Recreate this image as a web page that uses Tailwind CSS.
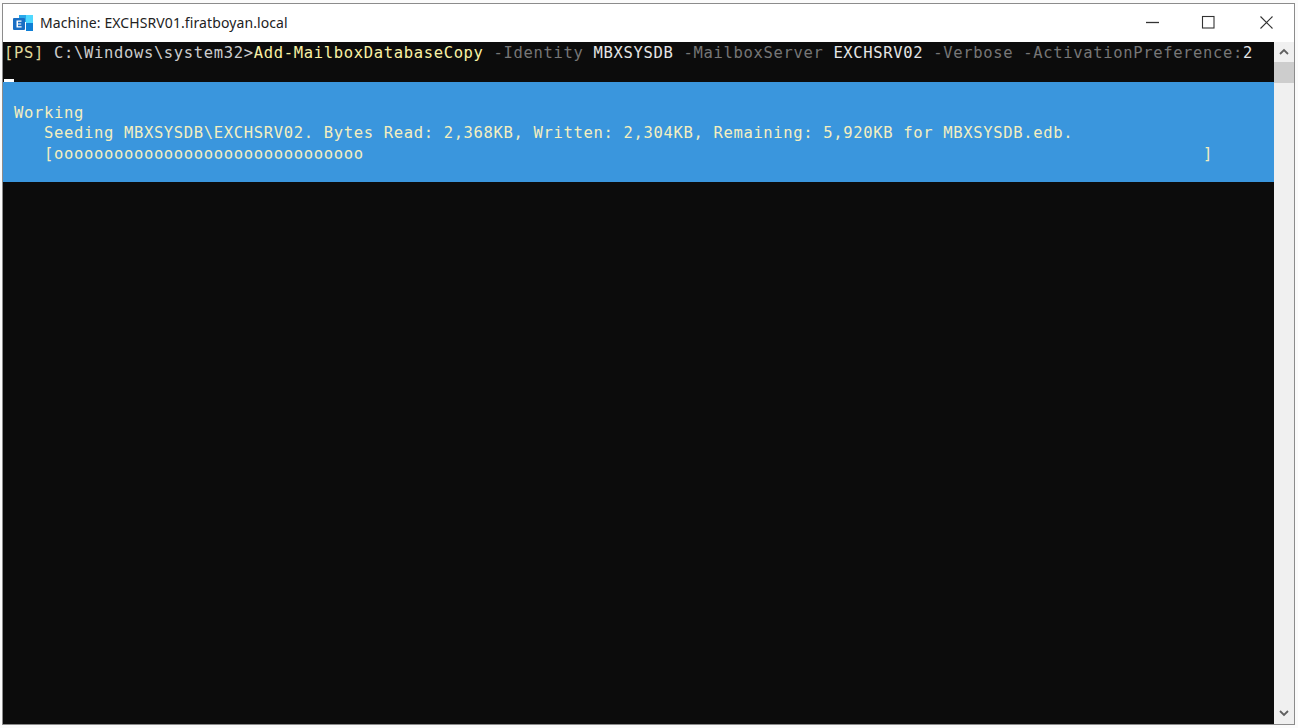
<!doctype html>
<html>
<head>
<meta charset="utf-8">
<script src="https://cdn.jsdelivr.net/npm/@tailwindcss/browser@4"></script>
</head>
<body class="m-0 bg-white">
<div class="w-[1298px] h-[728px] bg-[#fbfbfb] pt-[3px] pl-[2px] pr-[3px] pb-[3px] overflow-hidden">
  <div class="h-full flex flex-col border border-[#8c8c8c] bg-white">
    <header class="h-[38px] shrink-0 flex items-center bg-white">
      <svg class="ml-[10px] w-[20px] h-[17px]" viewBox="0 0 20 17">
        <rect x="6" y="0" width="7" height="7" fill="#28a8ea"/>
        <rect x="13" y="0" width="7" height="8" fill="#50d9ff"/>
        <rect x="13" y="8" width="7" height="8" fill="#0f7fd6"/>
        <rect x="0" y="3" width="12" height="12" rx="1" fill="#1a6fc4"/>
        <path d="M3.5 5.5h5v1.3H5v1.6h3.2v1.2H5v1.6h3.6v1.3H3.5z" fill="#fff"/>
      </svg>
      <span class="ml-[7px] mb-[2px] font-['Noto_Sans',sans-serif] text-[14px] text-[#222] tracking-[0.1px]">Machine: EXCHSRV01.firatboyan.local</span>
      <div class="ml-auto flex items-center h-full">
        <svg class="w-[58px] h-[38px]" viewBox="0 0 58 38"><path d="M26 18.5h13" stroke="#333" stroke-width="1.3"/></svg>
        <svg class="w-[58px] h-[38px]" viewBox="0 0 58 38"><rect x="24.5" y="12.5" width="11.5" height="11.5" fill="none" stroke="#333" stroke-width="1.1"/></svg>
        <svg class="w-[58px] h-[38px]" viewBox="0 0 58 38"><path d="M24.5 12.5l12 12M36.5 12.5l-12 12" stroke="#333" stroke-width="1.1"/></svg>
      </div>
    </header>
    <div class="flex-1 flex min-h-0">
      <main class="flex-1 bg-[#0c0c0c] font-['DejaVu_Sans_Mono',monospace] text-[15.5px] leading-[20px] tracking-[0.66px] text-[#ccc] overflow-hidden">
        <div class="pl-[1px] pt-[1px] h-[20px] whitespace-pre"><span class="text-[#e0da9c]">[PS]</span> C:\Windows\system32&gt;<span class="text-[#f9f1a5]">Add-MailboxDatabaseCopy</span> <span class="text-[#767676]">-Identity</span> <span class="text-[#e6e6e6]">MBXSYSDB</span> <span class="text-[#767676]">-MailboxServer</span> <span class="text-[#e6e6e6]">EXCHSRV02</span> <span class="text-[#767676]">-Verbose</span> <span class="text-[#767676]">-ActivationPreference:</span><span class="text-[#e6e6e6]">2</span></div>
        <div class="h-[20px] flex items-end"><div class="ml-[1px] w-[10px] h-[3px] bg-white"></div></div>
        <div class="h-[100px] bg-[#3a96dd] text-[#f4efc0] pt-[21px] pl-[1px]">
          <div class="whitespace-pre"> Working</div>
          <div class="whitespace-pre">    Seeding MBXSYSDB\EXCHSRV02. Bytes Read: 2,368KB, Written: 2,304KB, Remaining: 5,920KB for MBXSYSDB.edb.</div>
          <div class="whitespace-pre pt-[1px]">    [ooooooooooooooooooooooooooooooo                                                                                    ]</div>
        </div>
      </main>
      <aside class="w-[20px] shrink-0 bg-[#f0f0f0] flex flex-col">
        <div class="h-[20px] flex items-center justify-center"><svg class="w-[10px] h-[8px]" viewBox="0 0 10 8"><path d="M1 6l4-4 4 4" fill="none" stroke="#606060" stroke-width="1.8"/></svg></div>
        <div class="h-[21px] bg-[#cdcdcd]"></div>
        <div class="flex-1"></div>
        <div class="h-[20px] pb-[2px] flex items-center justify-center"><svg class="w-[10px] h-[8px]" viewBox="0 0 10 8"><path d="M1 2l4 4 4-4" fill="none" stroke="#606060" stroke-width="1.8"/></svg></div>
      </aside>
    </div>
  </div>
</div>
</body>
</html>
